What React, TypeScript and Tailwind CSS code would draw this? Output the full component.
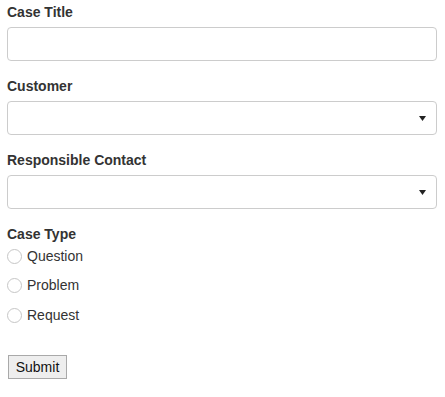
import React from "react";

const Arrow = () => (
  <svg width="7" height="5" viewBox="0 0 7 5" className="absolute right-[10px] top-[14px]">
    <path d="M0 0 H7 L3.5 5 Z" fill="#222" />
  </svg>
);

function Field({ label, select }: { label: string; select?: boolean }) {
  return (
    <div className="mb-[15px]">
      <label className="block font-bold text-[14px] leading-[20px] mb-[5px] text-[#333]">{label}</label>
      <div className="relative w-[430px] h-[34px] border border-[#cccccc] rounded-[4px] bg-white">
        {select && <Arrow />}
      </div>
    </div>
  );
}

function Radio({ label }: { label: string }) {
  return (
    <label className="flex items-center h-[20px]">
      <input
        type="radio"
        name="casetype"
        className="appearance-none w-[15px] h-[15px] shrink-0 rounded-full border border-[#c6c6c6] bg-white m-0 mr-[5px]"
      />
      <span className="text-[14px] text-[#333]">{label}</span>
    </label>
  );
}

export default function App() {
  return (
    <div
      className="bg-white w-[445px] h-[397px] pt-[2px] px-[7px]"
      style={{ fontFamily: '"Liberation Sans", Arial, sans-serif' }}
    >
      <Field label="Case Title" />
      <Field label="Customer" select />
      <Field label="Responsible Contact" select />
      <div>
        <label className="block font-bold text-[14px] leading-[20px] text-[#333]">Case Type</label>
        <div className="flex flex-col gap-[9.5px] mt-[2px]">
          <Radio label="Question" />
          <Radio label="Problem" />
          <Radio label="Request" />
        </div>
      </div>
      <button className="mt-[30px] ml-[1px] w-[59px] h-[24px] border border-[#a9a9a9] bg-[#eeeeee] text-[14px] text-[#111] flex items-center justify-center">
        Submit
      </button>
    </div>
  );
}
